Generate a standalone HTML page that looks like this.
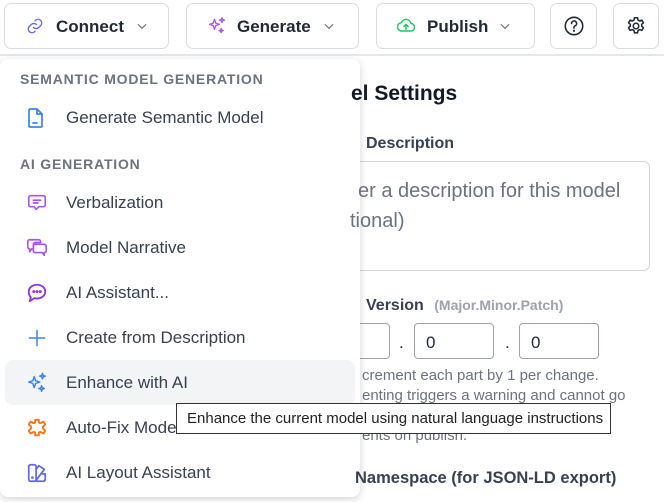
<!DOCTYPE html>
<html><head><meta charset="utf-8"><style>
*{box-sizing:border-box;margin:0;padding:0}
body{width:664px;height:502px;overflow:hidden;background:#fff;font-family:"Liberation Sans",sans-serif;color:#1f2937;position:relative}
.a{position:absolute;white-space:nowrap;z-index:5}
.btn{position:absolute;top:3px;height:46px;border:1px solid #d9dce1;border-radius:7px;background:#fff;font-size:17px;font-weight:bold;color:#1f2937;white-space:nowrap}
.btn svg,.btn span{position:absolute}
.btn span{top:13px}
.menu{position:absolute;left:0;top:59px;width:360px;height:438px;background:#fff;border-radius:8px;box-shadow:0 2px 8px rgba(0,0,0,.18);z-index:3}
.hd{position:absolute;left:20px;font-size:14px;letter-spacing:.8px;color:#6b7280;font-weight:bold}
.it{position:absolute;left:5px;width:350px;height:45px;display:flex;align-items:center;font-size:17px;color:#374151;border-radius:8px}
.it svg{position:absolute;left:21px}
.it span{position:absolute;left:61px}
.lbl{font-size:16px;font-weight:bold;color:#374151}
.gray{color:#6b7280;font-size:14px}
.inp{position:absolute;top:323px;height:36px;border:1px solid #9ca3af;border-radius:4px;font-size:17px;padding:9px 0 0 11px;background:#fff}
</style></head><body>
<div style="position:absolute;left:0;top:54px;width:664px;height:2px;background:#e5e7eb"></div>

<div class="btn" style="left:4px;width:165px">
<svg style="left:21px;top:13px" width="18" height="18" viewBox="0 0 24 24" fill="none" stroke="#6366f1" stroke-width="1.8" stroke-linecap="round"><path d="M10 14a5 5 0 0 0 7 0l3-3a5 5 0 0 0-7-7l-1 1"/><path d="M14 10a5 5 0 0 0-7 0l-3 3a5 5 0 0 0 7 7l1-1"/></svg>
<span style="left:51px">Connect</span>
<svg style="left:130px;top:15px" width="14" height="14" viewBox="0 0 24 24" fill="none" stroke="#6b7280" stroke-width="2"><path d="M5 9l7 7 7-7"/></svg></div>

<div class="btn" style="left:186px;width:173px">
<svg style="left:20px;top:12px" width="20" height="20" viewBox="0 0 24 24" fill="none" stroke="#a855f7" stroke-width="1.6" stroke-linejoin="round"><path d="M9 4l1.5 4.5L15 10l-4.5 1.5L9 16l-1.5-4.5L3 10l4.5-1.5z"/><path d="M18 2l.8 2.2L21 5l-2.2.8L18 8l-.8-2.2L15 5l2.2-.8z"/><path d="M17 15l.7 1.8 1.8.7-1.8.7L17 20l-.7-1.8-1.8-.7 1.8-.7z"/></svg>
<span style="left:50px">Generate</span>
<svg style="left:135px;top:15px" width="14" height="14" viewBox="0 0 24 24" fill="none" stroke="#6b7280" stroke-width="2"><path d="M5 9l7 7 7-7"/></svg></div>

<div class="btn" style="left:376px;width:159px">
<svg style="left:19px;top:12px" width="20" height="20" viewBox="0 0 24 24" fill="none" stroke="#22c55e" stroke-width="1.7" stroke-linecap="round" stroke-linejoin="round"><path d="M7 18a5 5 0 0 1-.5-10A6 6 0 0 1 18 9a4.5 4.5 0 0 1-.5 9z"/><path d="M12 16v-6M9.5 12.5L12 10l2.5 2.5"/></svg>
<span style="left:50px">Publish</span>
<svg style="left:121px;top:15px" width="14" height="14" viewBox="0 0 24 24" fill="none" stroke="#6b7280" stroke-width="2"><path d="M5 9l7 7 7-7"/></svg></div>

<div class="btn" style="left:550px;width:47px">
<svg style="left:12px;top:11px" width="22" height="22" viewBox="0 0 24 24" fill="none" stroke="#1f2937" stroke-width="1.7" stroke-linecap="round"><circle cx="12" cy="12" r="9.5"/><path d="M9.3 9.3a2.8 2.8 0 1 1 3.8 2.6c-.7.3-1.1.9-1.1 1.6v.8"/><circle cx="12" cy="17.2" r=".4" fill="#1f2937"/></svg></div>
<div class="btn" style="left:613px;width:46px">
<svg style="left:11px;top:11px" width="22" height="22" viewBox="0 0 24 24" fill="none" stroke="#1f2937" stroke-width="1.7" stroke-linejoin="round"><path d="M10.3 3h3.4l.5 2.5 1.8 1 2.4-.9 1.7 2.9-1.9 1.7v2l1.9 1.7-1.7 2.9-2.4-.9-1.8 1-.5 2.5h-3.4l-.5-2.5-1.8-1-2.4.9-1.7-2.9 1.9-1.7v-2L3.9 8.5l1.7-2.9 2.4.9 1.8-1z"/><circle cx="12" cy="12" r="3"/></svg></div>

<!-- right content -->
<div class="a" style="left:351px;top:82px;font-size:21px;font-weight:bold;color:#111827">el Settings</div>
<div class="a lbl" style="left:366px;top:135px">Description</div>
<div style="position:absolute;left:300px;top:161px;width:350px;height:110px;border:1px solid #d1d5db;border-radius:6px"></div>
<div class="a" style="left:358px;top:176px;font-size:20px;color:#6b7280;line-height:30px">er a description for this model</div>
<div class="a" style="left:350px;top:206px;font-size:20px;color:#6b7280;line-height:30px">tional)</div>
<div class="a lbl" style="left:366px;top:297px">Version <span class="gray" style="font-weight:bold;color:#9ca3af;margin-left:6px">(Major.Minor.Patch)</span></div>
<div class="inp" style="left:300px;width:90px"></div>
<div class="a" style="left:399px;top:333px;font-size:17px">.</div>
<div class="inp" style="left:414px;width:80px">0</div>
<div class="a" style="left:505px;top:333px;font-size:17px">.</div>
<div class="inp" style="left:519px;width:80px">0</div>
<div class="a gray" style="left:362px;top:366px;line-height:20px;font-size:15px">crement each part by 1 per change.<br>enting triggers a warning and cannot go<br>&nbsp;<br>ents on publish.</div>
<div class="a lbl" style="left:355px;top:469px;font-size:16.5px">Namespace (for JSON-LD export)</div>

<div class="menu">
<div class="hd" style="top:12px">SEMANTIC MODEL GENERATION</div>
<div class="it" style="top:36px"><svg width="20" height="22" viewBox="0 0 20 22" fill="none" stroke="#3b82f6" stroke-width="1.7" stroke-linejoin="round"><path d="M4 2h7l5 5v12a1 1 0 0 1-1 1H4a1 1 0 0 1-1-1V3a1 1 0 0 1 1-1z"/><path d="M11 2v5h5M7 16h4" stroke-linecap="round"/></svg><span>Generate Semantic Model</span></div>
<div class="hd" style="top:97px">AI GENERATION</div>
<div class="it" style="top:121px"><svg width="22" height="22" viewBox="0 0 24 24" fill="none" stroke="#a855f7" stroke-width="1.8" stroke-linejoin="round" stroke-linecap="round"><path d="M5 4h14a2 2 0 0 1 2 2v8a2 2 0 0 1-2 2h-5l-3 3-2-3H5a2 2 0 0 1-2-2V6a2 2 0 0 1 2-2z"/><path d="M8 9h8M8 12h5"/></svg><span>Verbalization</span></div>
<div class="it" style="top:166px"><svg width="22" height="22" viewBox="0 0 24 24" fill="none" stroke="#a855f7" stroke-width="1.8" stroke-linejoin="round"><path d="M4 3h10a2 2 0 0 1 2 2v1H10a2 2 0 0 0-2 2v5H6l-2 3v-3a2 2 0 0 1-2-2V5a2 2 0 0 1 2-2z"/><path d="M10 8h10a2 2 0 0 1 2 2v5a2 2 0 0 1-2 2v3l-2-3h-8a2 2 0 0 1-2-2v-5a2 2 0 0 1 2-2z"/></svg><span>Model Narrative</span></div>
<div class="it" style="top:211px"><svg width="22" height="22" viewBox="0 0 24 24" fill="none" stroke="#9333ea" stroke-width="2" stroke-linejoin="round"><path d="M12 3c5 0 9 3.3 9 7.5S17 18 12 18c-1 0-2-.1-2.8-.4L4 21l1.3-4.3C3.9 15.3 3 13 3 10.5 3 6.3 7 3 12 3z"/><circle cx="8.5" cy="10.5" r=".6" fill="#9333ea"/><circle cx="12" cy="10.5" r=".6" fill="#9333ea"/><circle cx="15.5" cy="10.5" r=".6" fill="#9333ea"/></svg><span>AI Assistant...</span></div>
<div class="it" style="top:256px"><svg width="22" height="22" viewBox="0 0 24 24" fill="none" stroke="#3b82f6" stroke-width="1.6"><path d="M12 3v18M3 12h18"/></svg><span>Create from Description</span></div>
<div class="it" style="top:301px;background:#f3f4f6"><svg width="22" height="22" viewBox="0 0 24 24" fill="none" stroke="#3b82f6" stroke-width="1.6" stroke-linejoin="round"><path d="M9 5l1.5 4.5L15 11l-4.5 1.5L9 17l-1.5-4.5L3 11l4.5-1.5z"/><path d="M18 1.5l.8 2.2L21 4.5l-2.2.8L18 7.5l-.8-2.2L15 4.5l2.2-.8z"/><path d="M17 15l.8 2.2 2.2.8-2.2.8L17 21l-.8-2.2-2.2-.8 2.2-.8z"/></svg><span>Enhance with AI</span></div>
<div class="it" style="top:346px"><svg width="22" height="22" viewBox="0 0 24 24" fill="none" stroke="#f97316" stroke-width="2" stroke-linejoin="round"><path d="M10 3h4v3a2 2 0 0 0 3 0l2-1 2 3-2 2a2 2 0 0 0 0 3l2 2-2 3-2-1a2 2 0 0 0-3 0v3h-4v-3a2 2 0 0 0-3 0l-2 1-2-3 2-2a2 2 0 0 0 0-3L3 8l2-3 2 1a2 2 0 0 0 3 0z"/></svg><span>Auto-Fix Model</span></div>
<div class="it" style="top:391px"><svg width="22" height="22" viewBox="0 0 24 24" fill="none" stroke="#6366f1" stroke-width="1.9" stroke-linejoin="round"><rect x="3" y="3" width="8" height="18" rx="2"/><path d="M11 8l3-4 6 4-9 12M11 21h8a2 2 0 0 0 2-2v-6h-4"/><circle cx="7" cy="17" r=".5" fill="#6366f1"/></svg><span>AI Layout Assistant</span></div>
</div>

<div class="a" style="left:176px;top:403px;width:435px;height:31px;background:#fff;border:1px solid #333;font-size:15px;color:#222;padding:6px 0 0 10px;z-index:10">Enhance the current model using natural language instructions</div>
</body></html>
